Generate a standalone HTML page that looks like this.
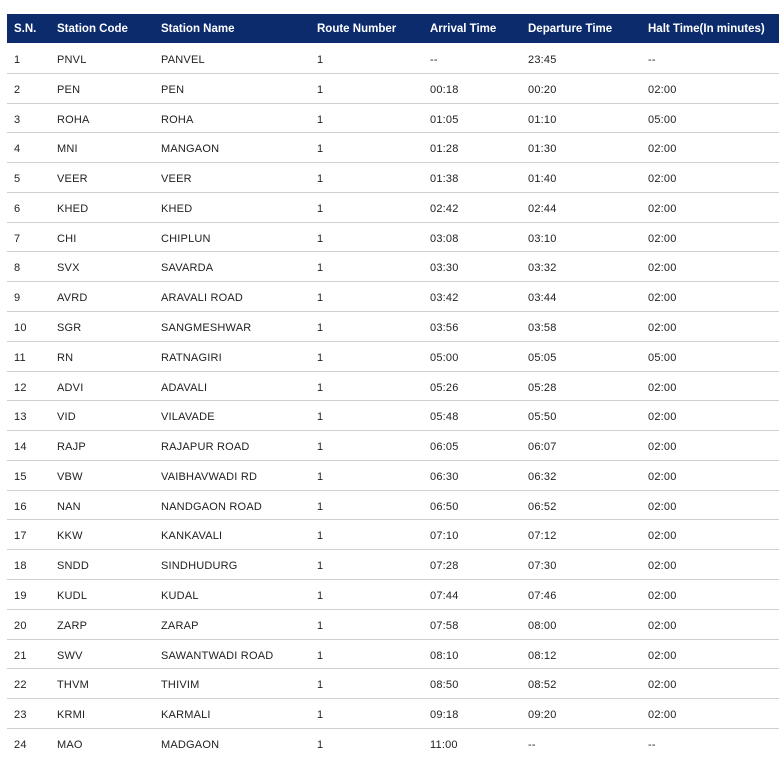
<!DOCTYPE html>
<html><head><meta charset="utf-8"><style>
body{margin:0;background:#fff;font-family:"Liberation Sans",Arial,sans-serif;width:779px;height:773px;overflow:hidden;position:relative}
.h{position:absolute;left:7px;top:14px;width:772px;height:29px;background:#0c2b6d;color:#fff;font-weight:bold;font-size:11.5px}
.r{position:absolute;left:7px;width:772px;box-sizing:border-box;height:29.78px;border-bottom:1px solid #d0d0d0;font-size:11px;color:#222;letter-spacing:0.2px}
.r.last{border-bottom:none}
.c{position:absolute;top:2px;line-height:29px;white-space:nowrap}
.h .c{top:1px;line-height:29px}
.c1{left:7px}.c2{left:50px}.c3{left:154px}.c4{left:310px}.c5{left:423px}.c6{left:521px}.c7{left:641px}
</style></head><body>
<div class="h"><span class="c c1">S.N.</span><span class="c c2">Station Code</span><span class="c c3">Station Name</span><span class="c c4">Route Number</span><span class="c c5">Arrival Time</span><span class="c c6">Departure Time</span><span class="c c7">Halt Time(In minutes)</span></div>
<div id="t"></div>
<script>
var d=[["PNVL","PANVEL","--","23:45","--"],["PEN","PEN","00:18","00:20","02:00"],["ROHA","ROHA","01:05","01:10","05:00"],["MNI","MANGAON","01:28","01:30","02:00"],["VEER","VEER","01:38","01:40","02:00"],["KHED","KHED","02:42","02:44","02:00"],["CHI","CHIPLUN","03:08","03:10","02:00"],["SVX","SAVARDA","03:30","03:32","02:00"],["AVRD","ARAVALI ROAD","03:42","03:44","02:00"],["SGR","SANGMESHWAR","03:56","03:58","02:00"],["RN","RATNAGIRI","05:00","05:05","05:00"],["ADVI","ADAVALI","05:26","05:28","02:00"],["VID","VILAVADE","05:48","05:50","02:00"],["RAJP","RAJAPUR ROAD","06:05","06:07","02:00"],["VBW","VAIBHAVWADI RD","06:30","06:32","02:00"],["NAN","NANDGAON ROAD","06:50","06:52","02:00"],["KKW","KANKAVALI","07:10","07:12","02:00"],["SNDD","SINDHUDURG","07:28","07:30","02:00"],["KUDL","KUDAL","07:44","07:46","02:00"],["ZARP","ZARAP","07:58","08:00","02:00"],["SWV","SAWANTWADI ROAD","08:10","08:12","02:00"],["THVM","THIVIM","08:50","08:52","02:00"],["KRMI","KARMALI","09:18","09:20","02:00"],["MAO","MADGAON","11:00","--","--"]];
var h="";d.forEach(function(r,i){h+='<div class="r'+(i==23?' last':'')+'" style="top:'+(44+i*29.78)+'px"><span class="c c1">'+(i+1)+'</span><span class="c c2">'+r[0]+'</span><span class="c c3">'+r[1]+'</span><span class="c c4">1</span><span class="c c5">'+r[2]+'</span><span class="c c6">'+r[3]+'</span><span class="c c7">'+r[4]+'</span></div>';});
document.getElementById("t").innerHTML=h;
</script>
</body></html>
